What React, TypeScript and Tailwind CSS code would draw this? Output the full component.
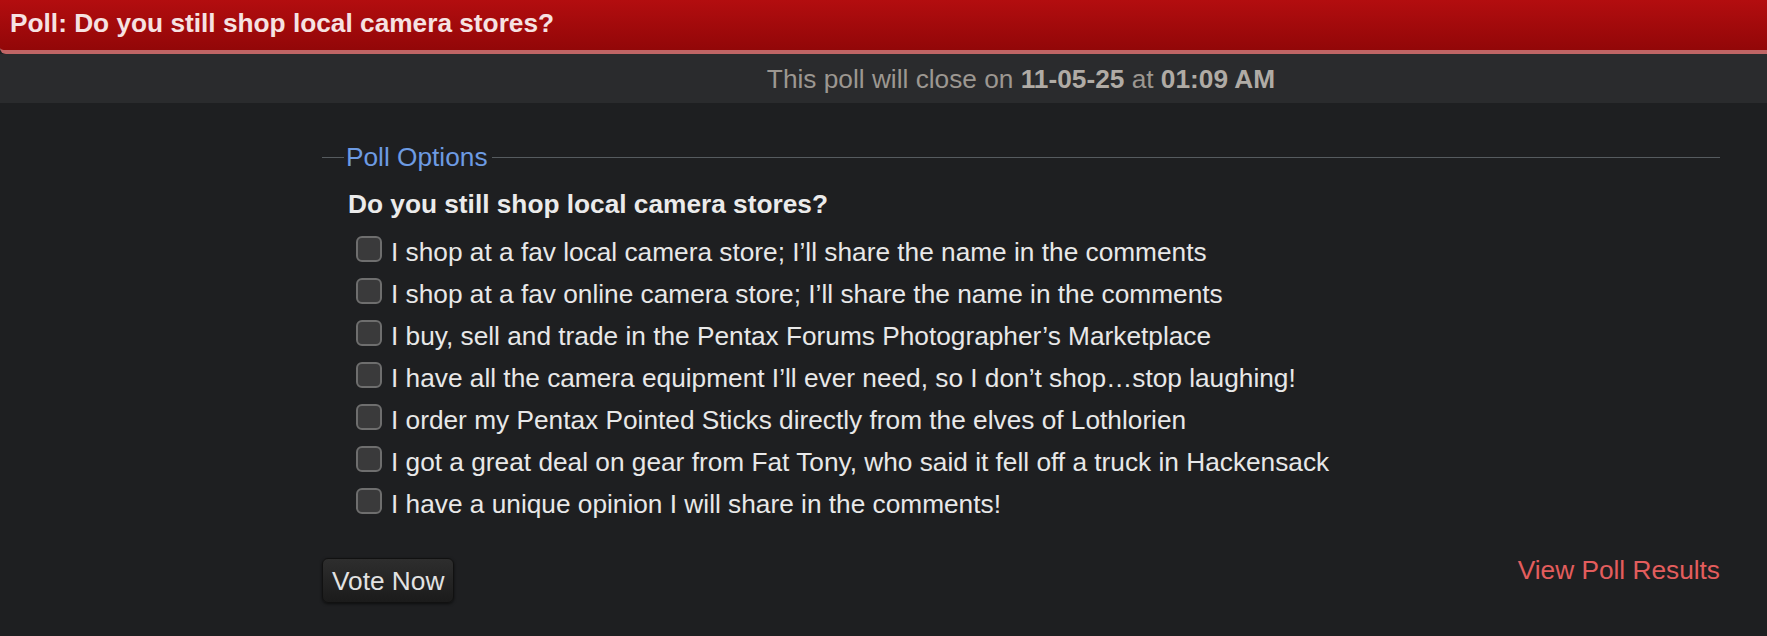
import { useState } from "react";

const options = [
  "I shop at a fav local camera store; I’ll share the name in the comments",
  "I shop at a fav online camera store; I’ll share the name in the comments",
  "I buy, sell and trade in the Pentax Forums Photographer’s Marketplace",
  "I have all the camera equipment I’ll ever need, so I don’t shop…stop laughing!",
  "I order my Pentax Pointed Sticks directly from the elves of Lothlorien",
  "I got a great deal on gear from Fat Tony, who said it fell off a truck in Hackensack",
  "I have a unique opinion I will share in the comments!",
];

export default function App() {
  const [checked, setChecked] = useState<number[]>([]);

  const toggle = (i: number) => {
    setChecked((prev) =>
      prev.includes(i) ? prev.filter((x) => x !== i) : [...prev, i]
    );
  };

  return (
    <div
      className="w-[1767px] h-[636px] bg-[#1e1f21] text-[26.25px] overflow-hidden"
      style={{ fontFamily: '"Liberation Sans", Arial, sans-serif' }}
    >
      {/* Title bar */}
      <div className="h-[54px] bg-gradient-to-b from-[#b30d0f] to-[#920708] border-b-[4px] border-[#c06565] rounded-bl-md flex items-center pl-[10px] pb-[4px]">
        <span className="font-bold text-[#f6e2e2] leading-[30px]">
          Poll: Do you still shop local camera stores?
        </span>
      </div>

      {/* Close notice */}
      <div className="h-[49px] bg-[#2a2b2d] flex items-center justify-center pl-[275px] text-[#9c9791]">
        <span className="leading-[30px]">
          This poll will close on{" "}
          <b className="text-[#b0aba5]">11-05-25</b> at{" "}
          <b className="text-[#b0aba5]">01:09 AM</b>
        </span>
      </div>

      {/* Poll body */}
      <div className="pl-[322px] pr-[47px] pt-[39px]">
        <fieldset className="border-t border-[#565b5f]">
          <legend className="ml-[22px] pl-[2px] pr-[4px] text-[#6d9be3] leading-[30px]">
            Poll Options
          </legend>
          <div className="pl-[26px] pt-[17px]">
            <div className="font-bold text-[#ebebeb] leading-[30px]">
              Do you still shop local camera stores?
            </div>
            <div className="pl-[8px] mt-[12px]">
              {options.map((o, i) => (
                <label
                  key={i}
                  className="flex items-center h-[42px] cursor-pointer"
                >
                  <span
                    onClick={() => toggle(i)}
                    className={`w-[26px] h-[26px] mt-[-7px] rounded-[6px] border-2 border-[#6e6e6e] shrink-0 flex items-center justify-center ${
                      checked.includes(i) ? "bg-[#5a5a5a]" : "bg-[#3a3a3b]"
                    }`}
                  >
                    {checked.includes(i) && (
                      <svg viewBox="0 0 16 16" className="w-4 h-4">
                        <path
                          d="M3 8l3 3 7-7"
                          fill="none"
                          stroke="#eee"
                          strokeWidth="2"
                        />
                      </svg>
                    )}
                  </span>
                  <span className="ml-[9px] text-[#e8e8e8] leading-[30px] whitespace-nowrap">
                    {o}
                  </span>
                </label>
              ))}
            </div>
          </div>
        </fieldset>

        <div className="flex justify-between items-start mt-[33px]">
          <button className="h-[45px] px-[9px] rounded-md border border-[#111] bg-gradient-to-b from-[#2e2e2e] to-[#1b1b1b] text-[#e2e2e2] shadow-[0_1px_3px_rgba(0,0,0,0.6)] leading-[30px]">
            Vote Now
          </button>
          <a className="text-[#e35d5d] leading-[30px] mt-[-3px] cursor-pointer">
            View Poll Results
          </a>
        </div>
      </div>
    </div>
  );
}
